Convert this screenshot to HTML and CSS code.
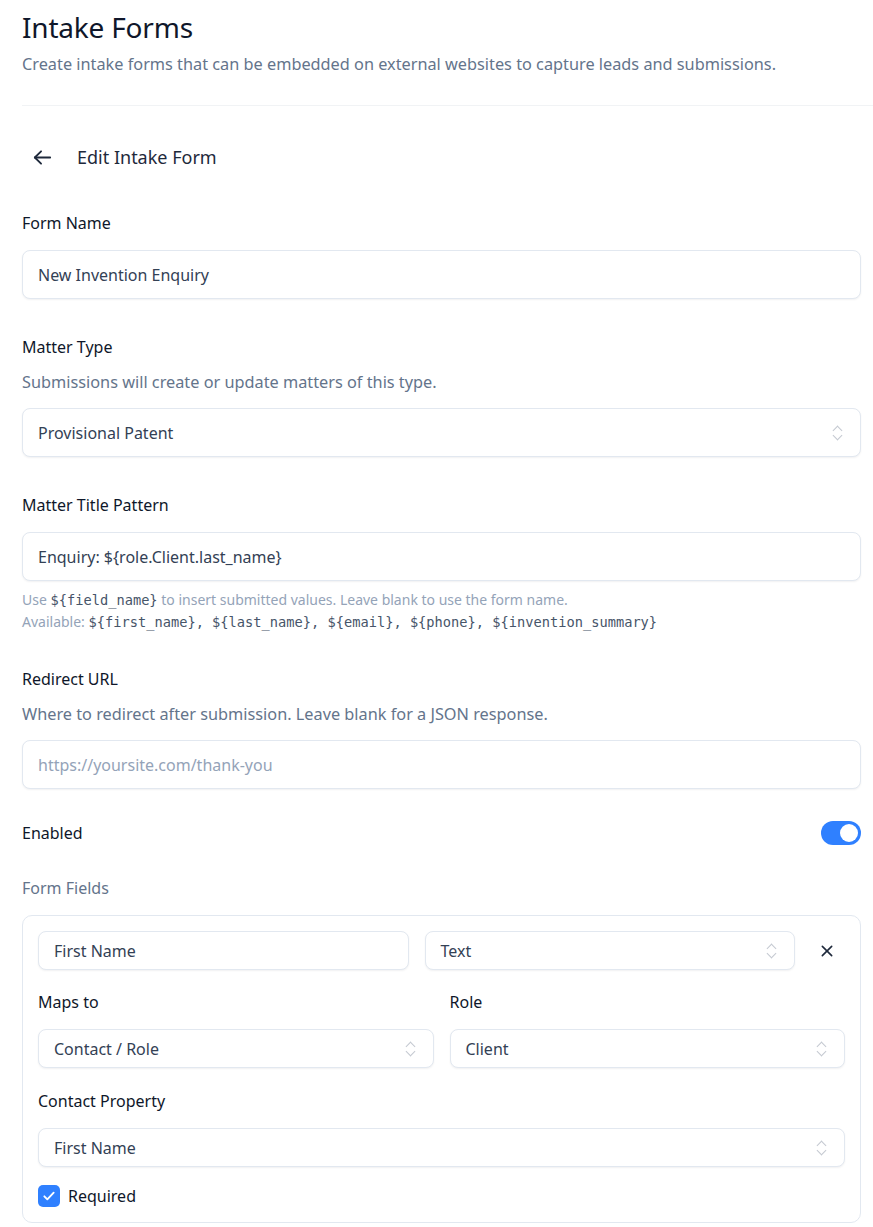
FILE: index.html
```html
<!DOCTYPE html>
<html lang="en">
<head>
<meta charset="utf-8">
<title>Intake Forms</title>
<link rel="stylesheet" href="styles.css">
</head>
<body>
<div class="page">
  <header class="page-head">
    <h1 class="title">Intake Forms</h1>
    <p class="subtitle">Create intake forms that can be embedded on external websites to capture leads and submissions.</p>
  </header>
  <div class="divider"></div>

  <div class="edit-head">
    <button class="back" aria-label="Back">
      <svg width="23" height="23" viewBox="0 0 24 24" fill="none" stroke="#1e293b" stroke-width="1.9" stroke-linecap="round" stroke-linejoin="round"><path d="M20 12H4"/><path d="M10.5 18.5L4 12l6.5-6.5"/></svg>
    </button>
    <h2 class="edit-title">Edit Intake Form</h2>
  </div>

  <div class="field first">
    <label class="label">Form Name</label>
    <div class="input big">New Invention Enquiry</div>
  </div>

  <div class="field">
    <label class="label">Matter Type</label>
    <p class="desc">Submissions will create or update matters of this type.</p>
    <div class="input big select">Provisional Patent<span class="chev"></span></div>
  </div>

  <div class="field">
    <label class="label">Matter Title Pattern</label>
    <div class="input big">Enquiry: ${role.Client.last_name}</div>
    <p class="help">Use <code>${field_name}</code> to insert submitted values. Leave blank to use the form name.<br>Available: <code>${first_name}, ${last_name}, ${email}, ${phone}, ${invention_summary}</code></p>
  </div>

  <div class="field after-help">
    <label class="label">Redirect URL</label>
    <p class="desc">Where to redirect after submission. Leave blank for a JSON response.</p>
    <div class="input big placeholder">https://yoursite.com/thank-you</div>
  </div>

  <div class="toggle-row">
    <span class="label">Enabled</span>
    <span class="toggle"><span class="knob"></span></span>
  </div>

  <div class="section-label">Form Fields</div>

  <div class="card">
    <div class="row-top">
      <div class="input small">First Name</div>
      <div class="input small select">Text<span class="chev"></span></div>
      <button class="close" aria-label="Remove">
        <svg width="16" height="16" viewBox="0 0 24 24" fill="none" stroke="#1e293b" stroke-width="2.4" stroke-linecap="round"><path d="M5 5l14 14M19 5L5 19"/></svg>
      </button>
    </div>
    <div class="grid2">
      <div class="sub">
        <label class="label">Maps to</label>
        <div class="input small select">Contact / Role<span class="chev"></span></div>
      </div>
      <div class="sub">
        <label class="label">Role</label>
        <div class="input small select">Client<span class="chev"></span></div>
      </div>
    </div>
    <div class="sub full">
      <label class="label">Contact Property</label>
      <div class="input small select">First Name<span class="chev"></span></div>
    </div>
    <label class="check">
      <span class="box">
        <svg width="16" height="16" viewBox="0 0 24 24" fill="none" stroke="#fff" stroke-width="2.8" stroke-linecap="round" stroke-linejoin="round"><path d="M5 12.5l4.5 4.5L19 7"/></svg>
      </span>
      <span class="check-text">Required</span>
    </label>
  </div>
</div>
</body>
</html>
```

FILE: styles.css
```css
* { box-sizing: border-box; }
html, body { margin: 0; padding: 0; background: #fff; }
body {
  font-family: "Noto Sans", "Open Sans", "Liberation Sans", sans-serif;
  color: #0f172a;
  overflow: hidden;
}
.page {
  padding: 0 12px 0 22px;
}
.page-head { padding-top: 7px; }
.title {
  margin: 0;
  font-size: 28px;
  line-height: 40px;
  font-weight: 400;
  color: #0f172a;
  letter-spacing: -0.2px;
}
.subtitle {
  margin: 5px 0 0;
  font-size: 16.3px;
  line-height: 24px;
  color: #64748b;
}
.divider {
  height: 1px;
  background: #f1f3f5;
  margin: 29px -12px 0 0;
}
.edit-head {
  display: flex;
  align-items: center;
  height: 40px;
  margin-top: 31px;
}
.back {
  width: 40px; height: 40px;
  border: 0; background: none; padding: 0;
  display: flex; align-items: center; justify-content: center;
}
.edit-title {
  margin: 0 0 0 15px;
  font-size: 18px;
  font-weight: 400;
  color: #1e293b;
}
.field { margin-top: 36px; }
.field.first { margin-top: 34px; }
.field.after-help { margin-top: 34px; }
.label {
  display: block;
  font-size: 16px;
  line-height: 24px;
  color: #0f172a;
}
.field > .label + .input { margin-top: 15px; }
.desc {
  margin: 11px 0 0;
  font-size: 16.3px;
  line-height: 24px;
  color: #64748b;
}
.desc + .input { margin-top: 14px; }
.input {
  position: relative;
  display: flex;
  align-items: center;
  border: 1px solid #e2e8f0;
  border-radius: 8px;
  background: #fff;
  box-shadow: 0 1px 2px rgba(15, 23, 42, 0.06);
  color: #334155;
  font-size: 16px;
  padding: 0 15px;
}
.input.big { height: 49px; }
.input.small { height: 39px; }
.placeholder { color: #94a3b8; }
.chev {
  position: absolute;
  right: 18px;
  top: 50%;
  width: 10px;
  height: 18px;
  margin-top: -9px;
}
.chev::before, .chev::after {
  content: "";
  position: absolute;
  left: 2px;
  width: 6px; height: 6px;
  border-left: 1.3px solid #c4c9d1;
  border-top: 1.3px solid #c4c9d1;
}
.chev::before { top: 3px; transform: rotate(45deg); }
.chev::after { bottom: 3px; transform: rotate(-135deg); }
.help {
  margin: 8px 0 0;
  font-size: 14px;
  line-height: 21px;
  color: #94a3b8;
}
.help code {
  font-family: "DejaVu Sans Mono", "Liberation Mono", monospace;
  font-size: 13.7px;
  color: #475569;
}
.toggle-row {
  display: flex;
  align-items: center;
  justify-content: space-between;
  margin-top: 32px;
  height: 24px;
}
.toggle {
  width: 40px; height: 24px;
  border-radius: 12px;
  background: #2f80ff;
  position: relative;
  display: block;
}
.knob {
  position: absolute;
  right: 3px; top: 3px;
  width: 18px; height: 18px;
  border-radius: 50%;
  background: #fff;
}
.section-label {
  margin-top: 31px;
  font-size: 16px;
  line-height: 24px;
  color: #64748b;
}
.card {
  margin-top: 15px;
  border: 1px solid #e2e8f0;
  border-radius: 10px;
  padding: 15px 15px 15px;
}
.row-top {
  display: flex;
  align-items: center;
  gap: 14px;
}
.row-top .input { flex: 1; }
.row-top .input + .input { margin-left: 2px; }
.close {
  width: 36px; height: 36px;
  border: 0; background: none; padding: 0;
  display: flex; align-items: center; justify-content: center;
}
.grid2 {
  display: grid;
  grid-template-columns: 1fr 1fr;
  gap: 16px;
  margin-top: 20px;
}
.sub .label { margin-bottom: 15px; }
.sub.full { margin-top: 21px; }
.check {
  display: flex;
  align-items: center;
  margin-top: 18px;
  gap: 8px;
}
.box {
  width: 22px; height: 22px;
  border-radius: 5px;
  background: #2f80ff;
  display: flex; align-items: center; justify-content: center;
}
.check-text {
  font-size: 16px;
  color: #0f172a;
}
```
